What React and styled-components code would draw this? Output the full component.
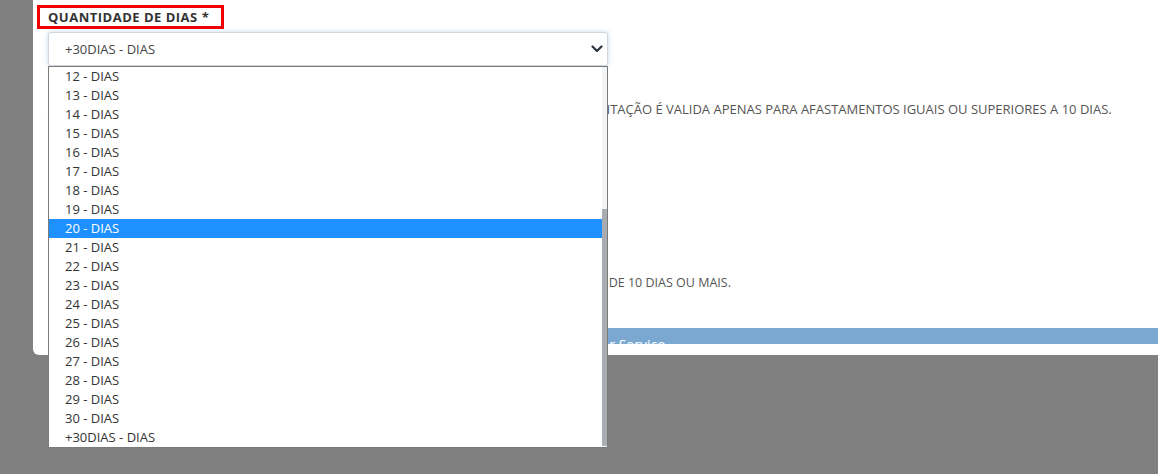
import React from "react";
import styled, { createGlobalStyle } from "styled-components";

const Global = createGlobalStyle`
  html, body { margin: 0; padding: 0; }
  body {
    background: #808080;
    font-family: "Open Sans", "Noto Sans", sans-serif;
    width: 1158px;
    height: 474px;
    overflow: hidden;
  }
`;

const Page = styled.div`
  display: flex;
  padding-left: 33px;
  height: 474px;
  box-sizing: border-box;
`;

const Panel = styled.div`
  flex: 1;
  align-self: flex-start;
  background: #fff;
  border-bottom-left-radius: 6px;
  padding: 5px 0 11px 4px;
  display: flex;
  flex-direction: column;
`;

const Field = styled.div`
  display: flex;
  flex-direction: column;
  align-items: flex-start;
`;

const LabelBox = styled.label`
  box-sizing: border-box;
  height: 24px;
  border: 3px solid #f20000;
  padding: 0 12px 0 8px;
  font-size: 13px;
  font-weight: 700;
  letter-spacing: 0.5px;
  line-height: 18px;
  color: #333;
`;

const SelectWrap = styled.div`
  position: relative;
  margin: 3px 0 0 11px;
  width: 560px;
`;

const SelectBox = styled.div`
  box-sizing: border-box;
  height: 34px;
  display: flex;
  align-items: center;
  justify-content: space-between;
  padding: 0 4px 0 16px;
  border: 1px solid #cfd6dd;
  border-radius: 3px;
  background: #fff;
  box-shadow: 0 0 5px rgba(120, 170, 225, 0.45);
  font-size: 13px;
  color: #444;
`;

const Menu = styled.div`
  position: absolute;
  top: 100%;
  left: 0;
  width: 100%;
  box-sizing: border-box;
  height: 382px;
  border: 1px solid #7a7a7a;
  background: #fff;
  display: flex;
  z-index: 10;
  overflow: hidden;
`;

const OptionList = styled.ul`
  flex: 1;
  list-style: none;
  margin: 0;
  padding: 0;
`;

const Option = styled.li`
  height: 19px;
  line-height: 19px;
  padding-left: 16px;
  font-size: 13px;
  color: ${(p) => (p.$active ? "#fff" : "#333")};
  background: ${(p) => (p.$active ? "#1e90ff" : "transparent")};
`;

const Track = styled.div`
  width: 5px;
  background: #f1f3f4;
  display: flex;
  flex-direction: column;
`;

const Thumb = styled.div`
  margin-top: 142px;
  height: 237px;
  background: #a9adb1;
  border-radius: 1px;
`;

const Notice = styled.p`
  margin: ${(p) => p.$mt}px 0 0 0;
  padding-left: ${(p) => p.$pl}px;
  font-size: ${(p) => p.$fs}px;
  line-height: 18px;
  color: #555;
  white-space: nowrap;
`;

const SectionBar = styled.div`
  margin: 36px 0 0 11px;
  height: 16px;
  overflow: hidden;
  background: #7ba8d1;
`;

const BarTitle = styled.div`
  padding: 8px 0 0 ${(p) => p.$pl}px;
  font-size: 14px;
  line-height: 17px;
  color: #fff;
  white-space: nowrap;
`;

const Chevron = () => (
  <svg width="12" height="8" viewBox="0 0 12 8" aria-hidden="true">
    <path d="M1.5 1.5 L6 6 L10.5 1.5" fill="none" stroke="#2f3640" strokeWidth="2.2" strokeLinecap="round" strokeLinejoin="round" />
  </svg>
);

const options = [];
for (let i = 12; i <= 30; i++) options.push(`${i} - DIAS`);
options.push("+30DIAS - DIAS");

export default function App() {
  return (
    <>
      <Global />
      <Page>
        <Panel>
          <Field>
            <LabelBox>QUANTIDADE DE DIAS *</LabelBox>
            <SelectWrap>
              <SelectBox>
                <span>+30DIAS - DIAS</span>
                <Chevron />
              </SelectBox>
              <Menu>
                <OptionList>
                  {options.map((o) => (
                    <Option key={o} $active={o === "20 - DIAS"}>
                      {o}
                    </Option>
                  ))}
                </OptionList>
                <Track>
                  <Thumb />
                </Track>
              </Menu>
            </SelectWrap>
          </Field>
          <Notice $mt={34} $pl={11} $fs={13}>
            ATENÇÃO: INFORME A QUANTIDADE DE DIAS CONFORME O ATESTADO MÉDICO. ESTA SOLICITAÇÃO É VALIDA APENAS PARA AFASTAMENTOS IGUAIS OU SUPERIORES A 10 DIAS.
          </Notice>
          <Notice $mt={156} $pl={26} $fs={12.5}>
            O BENEFÍCIO SOMENTE SERÁ CONCEDIDO PARA SOLICITAÇÕES COM AFASTAMENTO MÉDICO DE 10 DIAS OU MAIS.
          </Notice>
          <SectionBar>
            <BarTitle $pl={437}>Dados do Prestador Serviço</BarTitle>
          </SectionBar>
        </Panel>
      </Page>
    </>
  );
}
